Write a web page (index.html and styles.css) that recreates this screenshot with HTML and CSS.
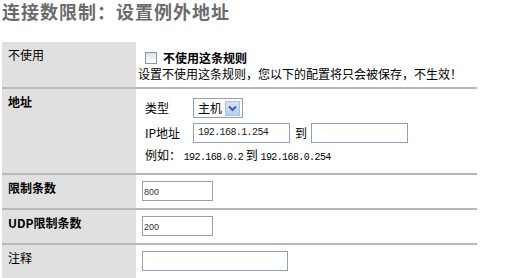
FILE: index.html
```html
<!DOCTYPE html>
<html lang="zh-CN">
<head>
  <meta charset="UTF-8" />
  <title>连接数限制</title>
  <link rel="stylesheet" href="styles.css">
</head>
<body>

  <h1 class="page-title">连接数限制：设置例外地址</h1>

  <div class="rule-form">
    <div class="row row-enable">
      <div class="label">不使用</div>
      <div class="value">
        <div class="check-line"><span class="checkbox"></span><b>不使用这条规则</b></div>
        <div>设置不使用这条规则，您以下的配置将只会被保存，不生效！</div>
      </div>
    </div>

    <div class="row row-addr">
      <div class="label bold">地址</div>
      <div class="value">
        <div class="addr-grid">
          <span>类型</span>
          <div class="select">
            <span class="select-text">主机</span>
            <span class="select-btn">
              <svg width="9" height="7" viewBox="0 0 9 7"><path d="M1 1.5 L4.5 5 L8 1.5" fill="none" stroke="#3d5a8c" stroke-width="1.8"/></svg>
            </span>
          </div>
          <span>IP地址</span>
          <div class="ip-line">
            <span class="field ip">192.168.1.254</span>
            <span class="to">到</span>
            <span class="field ip"></span>
          </div>
          <div class="example">例如： <span class="mono">192.168.0.2</span> 到 <span class="mono">192.168.0.254</span></div>
        </div>
      </div>
    </div>

    <div class="row row-input">
      <div class="label bold">限制条数</div>
      <div class="value"><span class="field num">800</span></div>
    </div>

    <div class="row row-input">
      <div class="label bold">UDP限制条数</div>
      <div class="value"><span class="field num">200</span></div>
    </div>

    <div class="row row-input">
      <div class="label">注释</div>
      <div class="value"><span class="field note"></span></div>
    </div>
  </div>

</body>
</html>
```

FILE: styles.css
```css
* { box-sizing: border-box; margin: 0; padding: 0; }
body { font-family: "Noto Sans CJK SC", sans-serif; font-size: 12px; line-height: 16px; color: #000; background: #fff; padding: 1px 2px 0; }

.page-title { font-size: 18px; line-height: 20px; letter-spacing: 1px; font-weight: bold; color: #6b6b6b; margin-bottom: 21px; }

.rule-form { width: 475px; }

.row { display: flex; border-bottom: 2px solid #b8b8b8; }
.label { width: 134px; flex: none; background: #e0e0e0; padding: 5px 6px; }
.bold { font-weight: bold; }
.value { flex: 1; }

/* row 1 */
.row-enable .value { padding: 8px 4px 5px 2px; }
.check-line { display: flex; align-items: center; padding-left: 7px; }
.check-line b { margin-left: 6px; }
.checkbox { width: 12px; height: 12px; border: 1px solid #8497ab; background: linear-gradient(#e2e2e2, #fff); }

/* row 2 */
.row-addr .value { padding: 9px 4px 7px 9px; }
.addr-grid { display: grid; grid-template-columns: 48px auto; row-gap: 5px; align-items: center; }
.select { display: flex; align-items: center; width: 50px; height: 20px; border: 1px solid #8fa3b8; padding: 0 2px 0 4px; justify-content: space-between; }
.select-btn { width: 15px; height: 15px; background: linear-gradient(#d6e2fb, #b9cdf6); border: 1px solid #aebfe6; display: flex; align-items: center; justify-content: center; }
.ip-line { display: flex; align-items: center; }
.to { margin: 0 4px 0 5px; }
.example { grid-column: 1 / -1; margin-top: -1px; }
.mono, .ip { font-family: "Liberation Mono", monospace; font-size: 10px; letter-spacing: -0.6px; }

/* text boxes */
.field { display: flex; align-items: center; height: 20px; border: 1px solid #8fa3b8; background: #fff; padding-left: 4px; color: #222; }
.ip { width: 97px; }
.num { width: 71px; font-family: "Liberation Sans", sans-serif; font-size: 9px; padding-left: 1px; padding-top: 2px; color: #333; }
.note { width: 146px; }

.row-input .value { padding: 6px 6px 7px 6px; }
```
